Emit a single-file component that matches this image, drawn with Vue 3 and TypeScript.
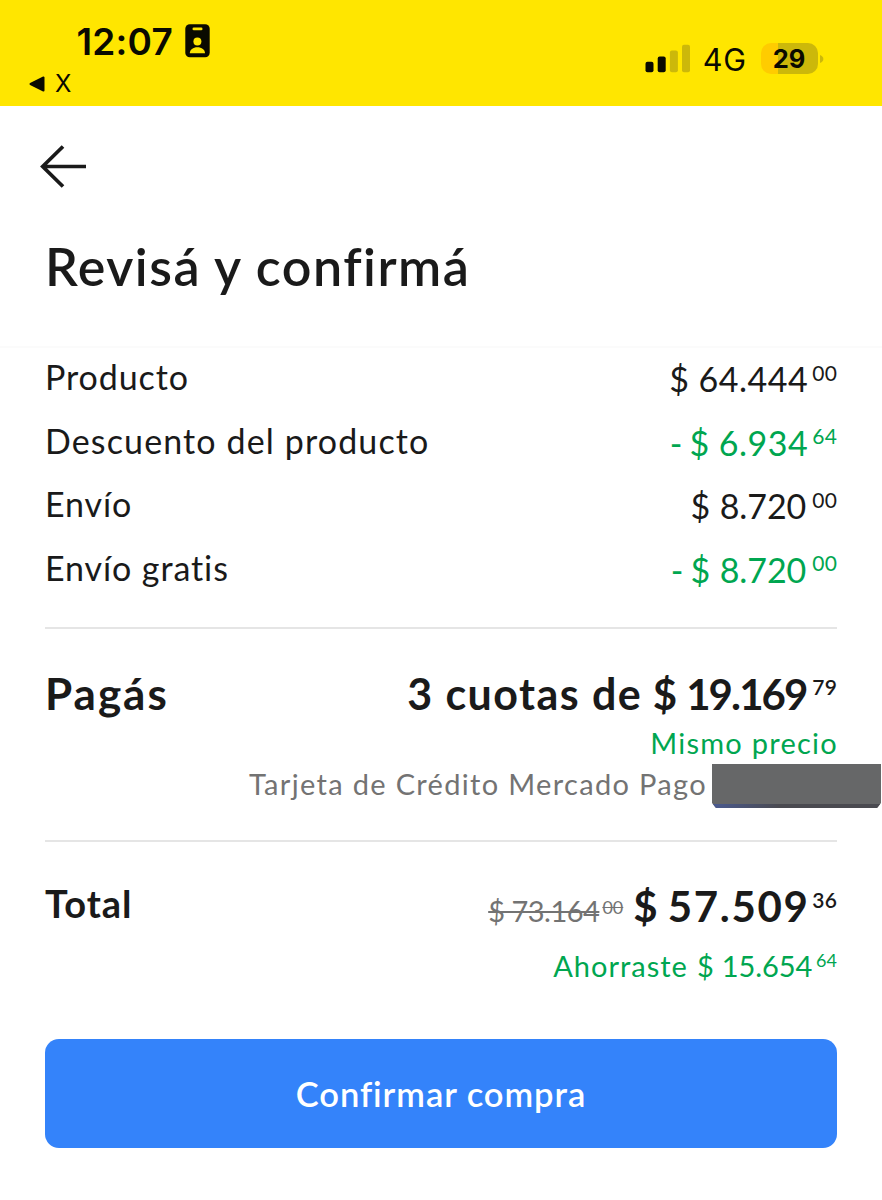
<script setup lang="ts">
interface Amount {
  value: string
  cents: string
  negative?: boolean
}

interface SummaryRow {
  label: string
  key: string
  amount: Amount
}

const rows: SummaryRow[] = [
  { label: 'Producto', key: 'product', amount: { value: '64.444', cents: '00' } },
  { label: 'Descuento del producto', key: 'discount', amount: { value: '6.934', cents: '64', negative: true } },
  { label: 'Envío', key: 'shipping', amount: { value: '8.720', cents: '00' } },
  { label: 'Envío gratis', key: 'free', amount: { value: '8.720', cents: '00', negative: true } },
]
</script>

<template>
  <div class="screen">
    <header class="status">
      <div class="status-left">
        <div class="clock-line">
          <span class="clock">12:07</span>
          <svg class="badge" width="25" height="34" viewBox="0 0 25 34">
            <rect x="0.3" y="0.3" width="24.4" height="33" rx="4.5" fill="#0a0a00" />
            <rect x="7.5" y="3.6" width="10" height="2.6" rx="1.3" fill="#ffe600" />
            <circle cx="12.4" cy="17.5" r="4" fill="#ffe600" />
            <path d="M4.8 29.2c0-3.600 3.300-6 7.600-6s7.600 2.400 7.600 6z" fill="#ffe600" />
          </svg>
        </div>
        <div class="back-app">
          <svg width="16" height="16" viewBox="0 0 16 16">
            <path d="M1.500 8L14.500 1.500V14.500z" fill="#0a0a00" stroke="#0a0a00" stroke-width="2" stroke-linejoin="round" />
          </svg>
          <span>X</span>
        </div>
      </div>
      <div class="status-right">
        <svg class="signal" width="45" height="29" viewBox="0 0 45 29">
          <rect x="0.500" y="17.800" width="8" height="10.500" rx="2" fill="#0a0a00" />
          <rect x="12.700" y="12.500" width="8" height="15.800" rx="2" fill="#0a0a00" />
          <rect x="24.900" y="6.500" width="8" height="21.800" rx="2" fill="#ccb80a" />
          <rect x="37" y="0.800" width="8" height="27.500" rx="2" fill="#ccb80a" />
        </svg>
        <span class="network">4G</span>
        <span class="battery">29</span>
        <svg class="battery-tip" width="4" height="8" viewBox="0 0 4 8">
          <path d="M0 0C4.500 1.500 4.500 6.500 0 8z" fill="#ccb80a" />
        </svg>
      </div>
    </header>

    <div class="heading">
      <svg class="arrow" width="48" height="44" viewBox="0 0 48 44" fill="none" stroke="#1a1a1a" stroke-width="3.700">
        <path d="M23 2.500L2.700 22.500L23 42.500M2.700 22.500H46" />
      </svg>
      <h1>Revisá y confirmá</h1>
    </div>

    <main>
      <section class="rows">
        <div v-for="row in rows" :key="row.key" class="row">
          <span class="label" :class="row.key">{{ row.label }}</span>
          <span class="amount" :class="{ green: row.amount.negative }">
            <span v-if="row.amount.negative" class="minus">-</span>
            <span>$</span>
            <span class="value" :class="row.key">{{ row.amount.value }}</span>
            <span class="cents">{{ row.amount.cents }}</span>
          </span>
        </div>
      </section>

      <section class="pay">
        <div class="pay-line">
          <h2>Pagás</h2>
          <div class="pay-amount">
            <span class="quotas">3 cuotas de</span>
            <span class="sign">$</span>
            <span class="value">19.169</span>
            <span class="cents">79</span>
          </div>
        </div>
        <div class="same green">Mismo precio</div>
        <div class="card-line">
          <span class="card-name">Tarjeta de Crédito Mercado Pago</span>
          <div class="redacted"></div>
        </div>
      </section>

      <section class="total">
        <div class="total-line">
          <h2>Total</h2>
          <div class="total-amounts">
            <span class="old"><span class="old-main">$ 73.164</span><span class="old-cents">00</span></span>
            <span class="final">
              <span>$</span>
              <span class="value">57.509</span>
              <span class="cents">36</span>
            </span>
          </div>
        </div>
        <div class="saved green">
          <span class="saved-word">Ahorraste</span>
          <span>$</span>
          <span class="value">15.654</span>
          <span class="cents">64</span>
        </div>
      </section>

      <button type="button">Confirmar compra</button>
    </main>
  </div>
</template>

<style>
body {
  margin: 0;
  background: #fff;
}
</style>

<style scoped>
.screen {
  width: 882px;
  height: 1200px;
  overflow: hidden;
  background: #fff;
  color: #1a1a1a;
  font-family: Lato, 'Open Sans', sans-serif;
  font-variant-ligatures: none;
  white-space: nowrap;
}

.status {
  display: flex;
  justify-content: space-between;
  box-sizing: border-box;
  height: 106px;
  padding-right: 58.500px;
  background: #ffe600;
  color: #0a0a00;
  font-family: Inter, 'Liberation Sans', sans-serif;
}

.clock-line {
  display: flex;
  align-items: center;
  gap: 12px;
  height: 34px;
  margin: 24px 0 0 76.500px;
}

.clock {
  font-size: 37px;
  font-weight: 600;
  line-height: 35px;
  letter-spacing: 0.200px;
}

.back-app {
  display: flex;
  align-items: center;
  gap: 10px;
  height: 26px;
  margin: 13px 0 0 29px;
  font-size: 24px;
  line-height: 28px;
}

.status-right {
  display: flex;
  align-items: center;
  height: 31px;
  margin-top: 43px;
}

.network {
  margin: 3px 14px 0 13px;
  font-size: 30.500px;
  line-height: 30px;
  letter-spacing: 0.600px;
}

.battery {
  width: 57px;
  height: 31px;
  margin-right: 2px;
  border-radius: 10px;
  background: linear-gradient(90deg, #ffcc00 17px, #ccb80a 17px);
  font-size: 25.500px;
  font-weight: 700;
  line-height: 31px;
  text-align: center;
}

.heading {
  height: 240px;
  border-bottom: 2px solid #fbfbfb;
}

.arrow {
  display: block;
  padding: 38px 0 0 40px;
}

h1,
h2 {
  margin: 0;
  font-weight: 600;
}

h1 {
  margin: 48px 0 0 45px;
  font-size: 52px;
  line-height: 60px;
  letter-spacing: 1.470px;
}

main {
  padding: 0 45px;
}

.rows {
  display: grid;
  grid-auto-rows: 57.500px;
  gap: 6px;
  padding-bottom: 31px;
  border-bottom: 2px solid #e5e5e5;
}

.row,
.pay-line,
.total-line {
  display: flex;
  justify-content: space-between;
  align-items: center;
}

.label {
  font-size: 34px;
  letter-spacing: 0.900px;
}

.label.discount {
  letter-spacing: 1.130px;
}

.amount {
  display: flex;
  align-items: baseline;
  padding-top: 4px;
  font-size: 34px;
}

.minus {
  margin-right: 7px;
}

.amount .value {
  margin-left: 9.500px;
  letter-spacing: 0.500px;
}

.amount .value.shipping,
.amount .value.free {
  margin-right: 2px;
  letter-spacing: -0.100px;
}

.cents {
  position: relative;
  top: -0.540em;
  margin-right: -0.500px;
  margin-left: 4px;
  font-size: 21px;
  letter-spacing: 0.500px;
}

.green {
  color: #00a650;
}

.pay {
  padding: 35px 0 32px;
  border-bottom: 2px solid #e5e5e5;
}

.pay-line {
  height: 58px;
}

h2 {
  font-size: 44px;
  font-weight: 700;
  letter-spacing: 2px;
}

.pay-amount,
.final {
  display: flex;
  align-items: baseline;
  font-size: 42px;
  font-weight: 700;
}

.quotas {
  font-size: 43px;
  letter-spacing: 1.450px;
}

.pay-amount .sign {
  margin: 0 9px 0 10.500px;
}

.pay-amount .value {
  margin-right: 1.600px;
  letter-spacing: -1.900px;
}

.pay-amount .cents,
.final .cents {
  top: -0.670em;
  font-weight: 600;
}

.same {
  height: 42px;
  margin-right: -1px;
  font-size: 29px;
  line-height: 42px;
  letter-spacing: 1.250px;
  text-align: right;
}

.card-line {
  display: flex;
  justify-content: flex-end;
  height: 44px;
  margin-right: -44px;
  color: #737373;
  font-size: 29px;
  line-height: 40px;
}

.card-name {
  letter-spacing: 1.330px;
}

.redacted {
  width: 169px;
  height: 44px;
  margin-left: 5px;
  background:
    linear-gradient(90deg, #4a5a90, #4a4a50 40%) 0 40px / 100% 4px no-repeat,
    #666768;
  clip-path: polygon(0 0, 100% 0, 100% 39px, 165px 100%, 4px 100%, 0 39px);
}

.total {
  padding-top: 35px;
}

.total-line {
  height: 58px;
}

.total h2 {
  padding-bottom: 6px;
  font-size: 38px;
  letter-spacing: 1px;
}

.total-amounts {
  display: flex;
  align-items: baseline;
  gap: 10px;
}

.old {
  display: flex;
  align-items: baseline;
  color: #737373;
  font-size: 29px;
}

.old-main {
  letter-spacing: -0.500px;
  text-decoration: line-through;
}

.old-cents {
  position: relative;
  top: -8px;
  margin-left: 3px;
  font-size: 18px;
  text-decoration: line-through;
}

.final .value {
  margin-right: -1.500px;
  margin-left: 10px;
  letter-spacing: 1.700px;
}

.saved {
  display: flex;
  justify-content: flex-end;
  align-items: baseline;
  height: 40px;
  margin-top: 11px;
  font-size: 29px;
  line-height: 40px;
}

.saved-word {
  margin-right: 9px;
  letter-spacing: 1px;
}

.saved .value {
  margin-left: 8px;
  letter-spacing: -0.100px;
}

.saved .cents {
  margin-right: 0;
  font-size: 18px;
  letter-spacing: 0;
}

button {
  display: block;
  width: 792px;
  height: 109px;
  margin-top: 53px;
  padding: 1px 0 0;
  border: 0;
  border-radius: 14px;
  background: #3483fa;
  color: #fff;
  font: 600 34.500px/108px Lato, 'Open Sans', sans-serif;
  font-variant-ligatures: none;
  letter-spacing: 0.950px;
}
</style>
